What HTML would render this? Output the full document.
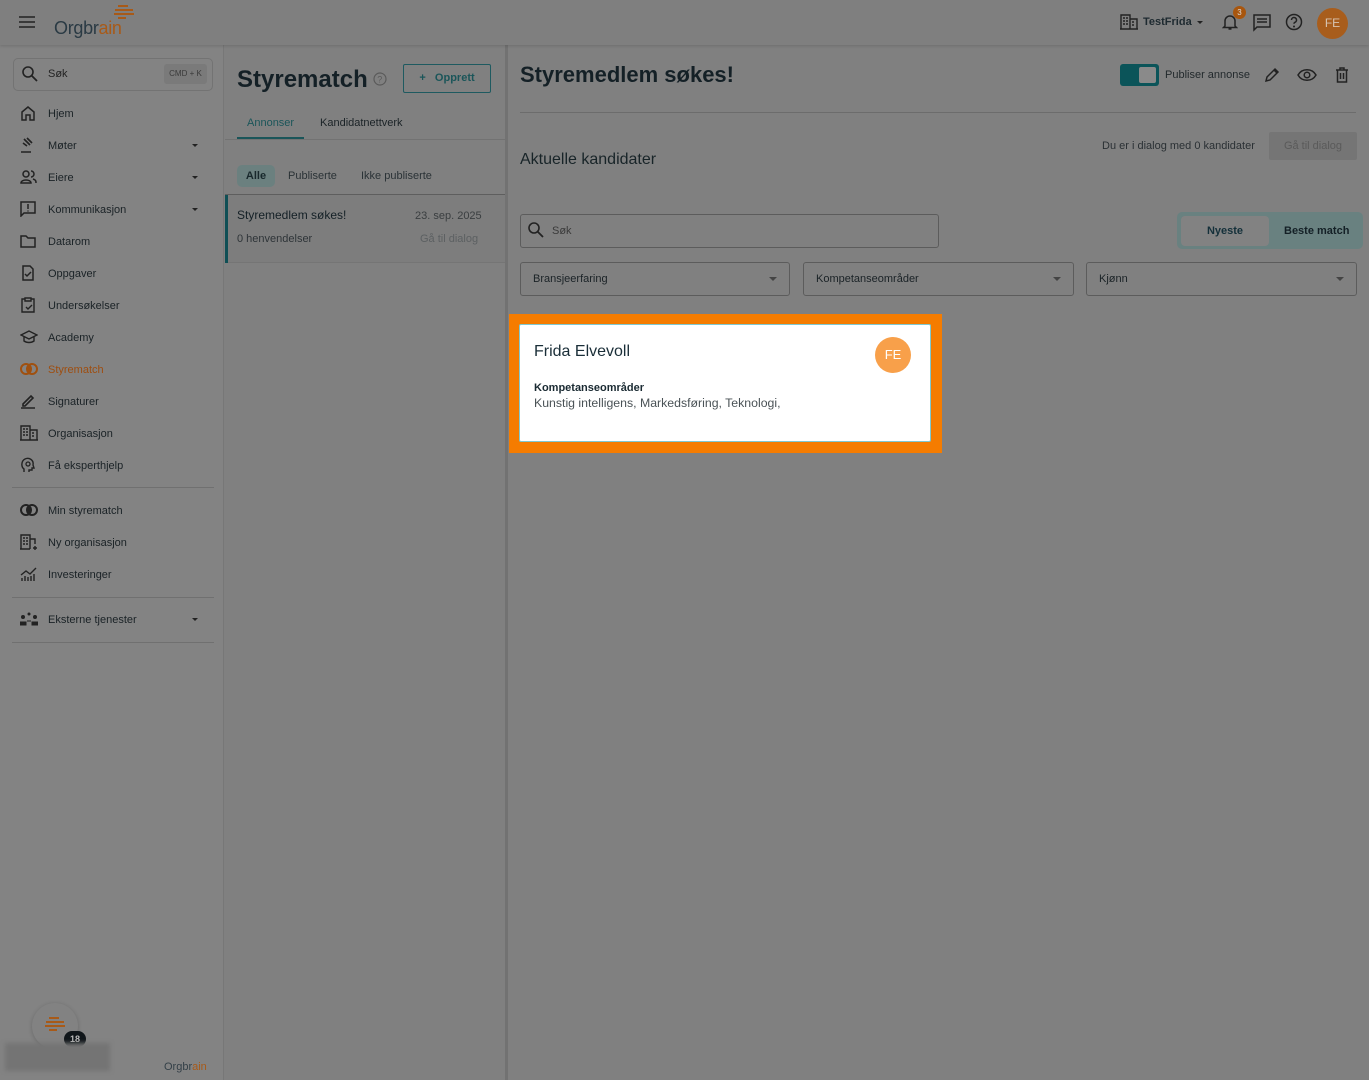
<!DOCTYPE html>
<html><head><meta charset="utf-8"><style>
*{box-sizing:border-box;margin:0;padding:0}
body{width:1369px;height:1080px;overflow:hidden;background:#808080;font-family:"Liberation Sans",sans-serif;color:#182428;position:relative}
.hdr{position:absolute;left:0;top:0;width:1369px;height:45px;background:#7f7f7f;box-shadow:0 1px 3px rgba(0,0,0,.15);z-index:2}
.side{position:absolute;left:0;top:45px;width:224px;height:1035px;background:#838383;border-right:1px solid #777}
.col2{position:absolute;left:225px;top:45px;width:280px;height:1035px;background:#808080}
.vdiv{position:absolute;left:505px;top:45px;width:3px;height:1035px;background:#727272}
.t{position:absolute;white-space:nowrap}
.nav{position:absolute;left:20px;font-size:11px;color:#1a2226;white-space:nowrap}
.nav svg{position:absolute;left:0;top:-3px}
.nav span{position:absolute;left:28px;top:0;white-space:nowrap}
.caret{position:absolute;left:192px;width:0;height:0;border-left:3px solid transparent;border-right:3px solid transparent;border-top:3px solid #222}
.hr{position:absolute;left:12px;width:202px;height:1px;background:#707070}
.sel{position:absolute;height:34px;border:1px solid #5c5c5c;border-radius:3px;font-size:11px;color:#1a2226}
.sel span{position:absolute;left:12px;top:10px}
.sel i{position:absolute;right:12px;top:14px;border-left:4px solid transparent;border-right:4px solid transparent;border-top:4px solid #444}
</style></head><body>
<div class="hdr">
 <svg class="t" style="left:19px;top:16px" width="16" height="12"><path d="M0 1h16M0 6h16M0 11h16" stroke="#222" stroke-width="1.5"/></svg>
 <div class="t" style="left:54px;top:18px;font-size:18px;color:#2a3a44;letter-spacing:-0.3px">Orgbr<span style="color:#a85a18">ain</span></div>
 <svg class="t" style="left:112px;top:4px" width="24" height="16"><g fill="#a85a18"><rect x="6" y="1" width="10" height="2"/><rect x="3" y="5" width="18" height="2"/><rect x="2" y="9" width="20" height="2"/><rect x="6" y="13" width="8" height="2"/></g></svg>
 <svg class="t" style="left:1120px;top:14px" width="18" height="16"><path d="M1 15V1h9v14M10 5h7v10M3 4h2M6 4h2M3 7h2M6 7h2M3 10h2M6 10h2M12 8h2M12 11h2M0 15h18" stroke="#222" stroke-width="1.4" fill="none"/></svg>
 <div class="t" style="left:1143px;top:16px;font-size:11px;font-weight:bold;color:#1e2a30">TestFrida</div>
 <div class="t" style="left:1197px;top:21px;border-left:3px solid transparent;border-right:3px solid transparent;border-top:3px solid #222"></div>
 <svg class="t" style="left:1222px;top:13px" width="16" height="18"><path d="M3 13V8a5 5 0 0 1 10 0v5l1.5 1.5h-13zM6.5 16h3" stroke="#222" stroke-width="1.5" fill="none"/></svg>
 <div class="t" style="left:1233px;top:6px;width:13px;height:13px;border-radius:50%;background:#a8560e;color:#ddd;font-size:8px;text-align:center;line-height:13px">3</div>
 <svg class="t" style="left:1253px;top:14px" width="18" height="18"><path d="M1 1h16v12H4l-3 3zM4 5h10M4 8h10" stroke="#222" stroke-width="1.5" fill="none"/></svg>
 <svg class="t" style="left:1285px;top:13px" width="18" height="18"><circle cx="9" cy="9" r="7.5" stroke="#222" stroke-width="1.5" fill="none"/><path d="M6.5 7a2.5 2.5 0 1 1 3.5 2.3c-.7.3-1 .8-1 1.5" stroke="#222" stroke-width="1.5" fill="none"/><circle cx="9" cy="13.5" r="1" fill="#222"/></svg>
 <div class="t" style="left:1317px;top:8px;width:31px;height:31px;border-radius:50%;background:#a85d1c;color:#d6c3b0;font-size:12px;text-align:center;line-height:31px">FE</div>
</div>

<div class="side">
 <div class="t" style="left:13px;top:13px;width:200px;height:33px;border:1px solid #737373;border-radius:5px"></div>
 <svg class="t" style="left:22px;top:21px" width="16" height="16"><circle cx="6" cy="6" r="5" stroke="#222" stroke-width="1.6" fill="none"/><path d="M10 10l5 5" stroke="#222" stroke-width="1.8"/></svg>
 <div class="t" style="left:48px;top:23px;font-size:11px;color:#222">Søk</div>
 <div class="t" style="left:164px;top:19px;width:43px;height:20px;background:#7a7a7a;border-radius:3px;font-size:8px;color:#3a3a3a;text-align:center;line-height:20px">CMD + K</div>
</div>
<div class="side" style="background:none;border:none">
 <div class="nav" style="top:63px"><svg width="16" height="16"><path d="M2 7l6-5 6 5v8h-4v-5H6v5H2z" stroke="#222" stroke-width="1.5" fill="none"/></svg><span>Hjem</span></div>
 <div class="nav" style="top:95px"><svg width="16" height="16"><path d="M4 2l6 6M7 1l5 5M3 6l4 3M1 15h10" stroke="#222" stroke-width="1.6"/></svg><span>Møter</span></div><div class="caret" style="top:99px"></div>
 <div class="nav" style="top:127px"><svg width="18" height="16"><circle cx="6" cy="5" r="3" stroke="#222" stroke-width="1.5" fill="none"/><path d="M1 14c0-4 10-4 10 0zM11 2a3 3 0 0 1 0 6M13 10c3 1 3 2 3 4" stroke="#222" stroke-width="1.5" fill="none"/></svg><span>Eiere</span></div><div class="caret" style="top:131px"></div>
 <div class="nav" style="top:159px"><svg width="16" height="16"><path d="M1 1h14v11H4l-3 3zM8 3v5M8 9.5v1" stroke="#222" stroke-width="1.5" fill="none"/></svg><span>Kommunikasjon</span></div><div class="caret" style="top:163px"></div>
 <div class="nav" style="top:191px"><svg width="16" height="16"><path d="M1 3h5l2 2h7v9H1z" stroke="#222" stroke-width="1.5" fill="none"/></svg><span>Datarom</span></div>
 <div class="nav" style="top:223px"><svg width="16" height="16"><path d="M3 1h7l3 3v11H3zM5 9l2 2 4-4" stroke="#222" stroke-width="1.5" fill="none"/></svg><span>Oppgaver</span></div>
 <div class="nav" style="top:255px"><svg width="16" height="16"><path d="M5 2H2v13h12V2h-3M5 1h6v3H5zM6 10l2 2 4-4" stroke="#222" stroke-width="1.4" fill="none"/></svg><span>Undersøkelser</span></div>
 <div class="nav" style="top:287px"><svg width="18" height="16"><path d="M1 6l8-4 8 4-8 4zM4 8v4c3 2 7 2 10 0V8" stroke="#222" stroke-width="1.4" fill="none"/></svg><span>Academy</span></div>
 <div class="nav" style="top:319px;color:#9e4e10"><svg width="18" height="16"><circle cx="6" cy="8" r="5" stroke="#a0500f" stroke-width="2" fill="none"/><circle cx="12" cy="8" r="5" stroke="#a0500f" stroke-width="2" fill="none"/><path d="M9 4a5 5 0 0 1 0 8a5 5 0 0 1 0-8" fill="#a0500f"/></svg><span>Styrematch</span></div>
 <div class="nav" style="top:351px"><svg width="16" height="16"><path d="M3 11L11 3l2 2-8 8H3zM1 15h14" stroke="#222" stroke-width="1.6" fill="none"/></svg><span>Signaturer</span></div>
 <div class="nav" style="top:383px"><svg width="18" height="16"><path d="M1 15V1h9v14M10 5h7v10M0 15h18M3 4h2M6 4h2M3 7h2M6 7h2M3 10h2M6 10h2M12 8h2M12 11h2" stroke="#222" stroke-width="1.4" fill="none"/></svg><span>Organisasjon</span></div>
 <div class="nav" style="top:415px"><svg width="16" height="17"><path d="M4 15v-3C1 10 1 4 5 2c4-2 9 1 8 6l1 3h-2v2H9v2" stroke="#222" stroke-width="1.4" fill="none"/><circle cx="8" cy="7" r="2" stroke="#222" stroke-width="1.3" fill="none"/></svg><span>Få eksperthjelp</span></div>
 <div class="hr" style="top:442px"></div>
 <div class="nav" style="top:460px"><svg width="18" height="16"><circle cx="6" cy="8" r="5" stroke="#222" stroke-width="2" fill="none"/><circle cx="12" cy="8" r="5" stroke="#222" stroke-width="2" fill="none"/><path d="M9 4a5 5 0 0 1 0 8a5 5 0 0 1 0-8" fill="#222"/></svg><span>Min styrematch</span></div>
 <div class="nav" style="top:492px"><svg width="18" height="17"><path d="M1 15V1h9v14M10 5h5v5M0 15h10M3 4h2M6 4h2M3 7h2M6 7h2M3 10h2M6 10h2M15 12v4M13 14h4" stroke="#222" stroke-width="1.4" fill="none"/></svg><span>Ny organisasjon</span></div>
 <div class="nav" style="top:524px"><svg width="18" height="16"><path d="M1 9l5-4 4 3 6-6M2 15v-3M5 15v-5M8 15v-4M11 15v-5M14 15V8" stroke="#222" stroke-width="1.4" fill="none"/></svg><span>Investeringer</span></div>
 <div class="hr" style="top:552px"></div>
 <div class="nav" style="top:569px"><svg width="18" height="16"><circle cx="3" cy="6" r="2" fill="#222"/><circle cx="15" cy="6" r="2" fill="#222"/><circle cx="9" cy="3" r="1.5" fill="#222"/><path d="M0 14v-3h6v3zM12 14v-3h6v3zM7 10h4" fill="#222" stroke="#222"/></svg><span>Eksterne tjenester</span></div><div class="caret" style="top:573px"></div>
 <div class="hr" style="top:597px"></div>
 <div class="t" style="left:32px;top:958px;width:46px;height:46px;border-radius:50%;background:#828282;box-shadow:0 1px 4px rgba(0,0,0,.2)"></div>
 <svg class="t" style="left:43px;top:971px" width="24" height="16"><g fill="#a85a18"><rect x="6" y="1" width="10" height="2"/><rect x="3" y="5" width="18" height="2"/><rect x="2" y="9" width="20" height="2"/><rect x="6" y="13" width="8" height="2"/></g></svg>
 <div class="t" style="left:64px;top:986px;width:22px;height:16px;border-radius:8px;background:#10161a;color:#bbb;font-size:9px;font-weight:bold;text-align:center;line-height:16px">18</div>
 <div class="t" style="left:5px;top:998px;width:105px;height:28px;background:#747474;filter:blur(2px)"></div>
 <div class="t" style="left:164px;top:1016px;font-size:11px;color:#344048">Orgbr<span style="color:#a85a18">ain</span></div>
</div>

<div class="col2">
 <div class="t" style="left:12px;top:21px;font-size:24px;font-weight:bold;color:#142026">Styrematch</div>
 <svg class="t" style="left:148px;top:27px" width="14" height="14"><circle cx="7" cy="7" r="6" stroke="#5a5a5a" stroke-width="1.2" fill="none"/><text x="4.3" y="10.5" font-size="9" fill="#5a5a5a" font-family="Liberation Sans">?</text></svg>
 <div class="t" style="left:178px;top:19px;width:88px;height:29px;border:1px solid #1e5a60;border-radius:2px;font-size:11px;font-weight:bold;color:#1a5559;line-height:27px;text-align:center">+&nbsp;&nbsp;&nbsp;Opprett</div>
 <div class="t" style="left:22px;top:72px;font-size:11px;color:#1a5559">Annonser</div>
 <div class="t" style="left:12px;top:92px;width:67px;height:2px;background:#1a5559"></div>
 <div class="t" style="left:95px;top:72px;font-size:11px;color:#1a2226">Kandidatnettverk</div>
 <div class="t" style="left:0;top:94px;width:280px;height:1px;background:#727272"></div>
 <div class="t" style="left:12px;top:120px;width:38px;height:22px;border-radius:5px;background:#6b807f;font-size:11px;font-weight:bold;color:#18282c;text-align:center;line-height:22px">Alle</div>
 <div class="t" style="left:63px;top:125px;font-size:11px;color:#2a3236">Publiserte</div>
 <div class="t" style="left:136px;top:125px;font-size:11px;color:#2a3236">Ikke publiserte</div>
 <div class="t" style="left:0;top:149px;width:280px;height:1px;background:#5e5e5e"></div>
 <div class="t" style="left:0;top:150px;width:280px;height:68px;background:#7d7d7d;border-bottom:1px solid #757575"></div>
 <div class="t" style="left:0;top:150px;width:3px;height:68px;background:#0f4f55"></div>
 <div class="t" style="left:12px;top:163px;font-size:12px;color:#142026">Styremedlem søkes!</div>
 <div class="t" style="left:190px;top:165px;font-size:11px;color:#3a3e40">23. sep. 2025</div>
 <div class="t" style="left:12px;top:188px;font-size:11px;color:#2e3438">0 henvendelser</div>
 <div class="t" style="left:195px;top:188px;font-size:11px;color:#5c6062">Gå til dialog</div>
</div>
<div class="vdiv"></div>

<div class="t" style="left:520px;top:62px;font-size:22px;font-weight:bold;color:#142026">Styremedlem søkes!</div>
<div class="t" style="left:1120px;top:64px;width:39px;height:22px;border-radius:3px;background:#0b5459"></div>
<div class="t" style="left:1139px;top:67px;width:17px;height:16px;border-radius:2px;background:#8a8a8a"></div>
<div class="t" style="left:1165px;top:69px;font-size:11px;color:#22292c">Publiser annonse</div>
<svg class="t" style="left:1264px;top:67px" width="16" height="16"><path d="M2 14l1-4 8-8 3 3-8 8zM10 3l3 3" stroke="#222" stroke-width="1.5" fill="none"/></svg>
<svg class="t" style="left:1297px;top:68px" width="20" height="14"><path d="M1 7c4-7 14-7 18 0c-4 7-14 7-18 0z" stroke="#222" stroke-width="1.5" fill="none"/><circle cx="10" cy="7" r="2.8" stroke="#222" stroke-width="1.5" fill="none"/></svg>
<svg class="t" style="left:1335px;top:67px" width="14" height="16"><path d="M1 3h12M5 3V1h4v2M2.5 3v12h9V3M5.5 6v6M8.5 6v6" stroke="#222" stroke-width="1.5" fill="none"/></svg>
<div class="t" style="left:520px;top:112px;width:836px;height:1px;background:#6c6c6c"></div>
<div class="t" style="left:520px;top:151px;font-size:16px;color:#182428">Aktuelle kandidater</div>
<div class="t" style="left:1102px;top:140px;font-size:11px;color:#2a3034">Du er i dialog med 0 kandidater</div>
<div class="t" style="left:1269px;top:132px;width:88px;height:28px;background:#757575;border-radius:2px;font-size:11px;color:#5a5a5a;text-align:center;line-height:28px">Gå til dialog</div>

<div class="t" style="left:520px;top:214px;width:419px;height:34px;border:1px solid #5c5c5c;border-radius:3px"></div>
<svg class="t" style="left:528px;top:222px" width="16" height="16"><circle cx="6" cy="6" r="5" stroke="#222" stroke-width="1.6" fill="none"/><path d="M10 10l5 5" stroke="#222" stroke-width="1.8"/></svg>
<div class="t" style="left:552px;top:225px;font-size:11px;color:#3a3a3a">Søk</div>
<div class="t" style="left:1177px;top:212px;width:186px;height:37px;border-radius:5px;background:#698180"></div>
<div class="t" style="left:1181px;top:216px;width:88px;height:30px;border-radius:4px;background:#828282;font-size:11px;font-weight:bold;color:#14303a;text-align:center;line-height:30px">Nyeste</div>
<div class="t" style="left:1284px;top:225px;font-size:11px;font-weight:bold;color:#142026">Beste match</div>
<div class="sel" style="left:520px;top:262px;width:270px"><span>Bransjeerfaring</span><i></i></div>
<div class="sel" style="left:803px;top:262px;width:271px"><span>Kompetanseområder</span><i></i></div>
<div class="sel" style="left:1086px;top:262px;width:271px"><span>Kjønn</span><i></i></div>

<div class="t" style="left:509px;top:314px;width:433px;height:139px;background:#f57c00"></div>
<div class="t" style="left:519px;top:324px;width:412px;height:118px;background:#fff;border:1px solid #7fc8d0;border-radius:2px"></div>
<div class="t" style="left:534px;top:343px;font-size:16px;color:#1a2e38">Frida Elvevoll</div>
<div class="t" style="left:875px;top:337px;width:36px;height:36px;border-radius:50%;background:#f8a04a;color:#fff;font-size:13px;text-align:center;line-height:36px">FE</div>
<div class="t" style="left:534px;top:382px;font-size:11px;font-weight:bold;color:#1a2a32">Kompetanseområder</div>
<div class="t" style="left:534px;top:396px;font-size:12.3px;color:#4a5256">Kunstig intelligens, Markedsføring, Teknologi,</div>
</body></html>
